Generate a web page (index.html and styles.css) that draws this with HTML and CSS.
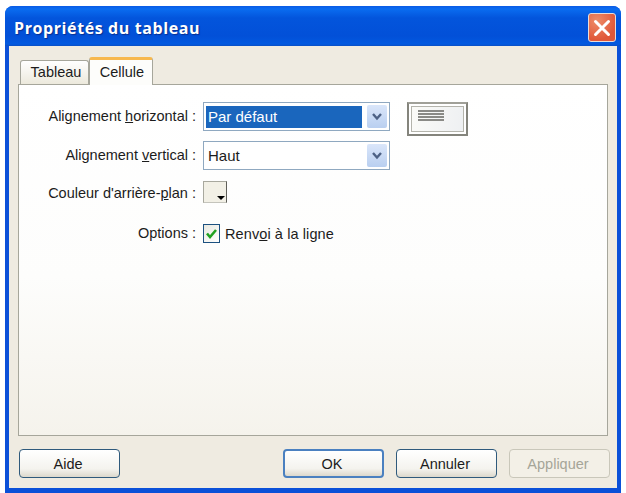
FILE: index.html
```html
<!DOCTYPE html>
<html lang="fr">
<head>
  <meta charset="UTF-8" />
  <title>Propriétés du tableau</title>
  <link rel="stylesheet" href="styles.css">
</head>
<body>
  <div class="window">
    <!-- Barre de titre -->
    <div class="titlebar">
      <span class="title">Propriétés du tableau</span>
      <div class="close">
        <svg width="20" height="20" viewBox="0 0 20 20"><path d="M3.5 3.5 L16.5 16.5 M16.5 3.5 L3.5 16.5" stroke="#fff" stroke-width="3" stroke-linecap="round"/></svg>
      </div>
    </div>

    <div class="client">
      <!-- Onglets -->
      <div class="tabs">
        <div class="tab">Tableau</div>
        <div class="tab active">Cellule</div>
      </div>

      <div class="pane">
        <div class="form">
          <label class="label row-tall">Alignement <u>h</u>orizontal :</label>
          <div class="controls">
            <div class="select">
              <span class="select-value selected">Par défaut</span>
              <span class="select-btn">
                <svg width="12" height="10" viewBox="0 0 12 10"><path d="M2 2 L6 6.5 L10 2" fill="none" stroke="#4d6185" stroke-width="2.4"/></svg>
              </span>
            </div>
            <div class="preview">
              <div class="preview-inner">
                <span class="line"></span><span class="line"></span><span class="line"></span><span class="line"></span>
              </div>
            </div>
          </div>

          <label class="label row-tall">Alignement <u>v</u>ertical :</label>
          <div class="controls">
            <div class="select">
              <span class="select-value">Haut</span>
              <span class="select-btn">
                <svg width="12" height="10" viewBox="0 0 12 10"><path d="M2 2 L6 6.5 L10 2" fill="none" stroke="#4d6185" stroke-width="2.4"/></svg>
              </span>
            </div>
          </div>

          <label class="label row-color">Couleur d'arrière-<u>p</u>lan :</label>
          <div class="controls">
            <div class="color-btn"><span class="color-arrow"></span></div>
          </div>

          <label class="label row-check">Options :</label>
          <div class="controls check-row">
            <span class="checkbox">
              <svg width="13" height="13" viewBox="0 0 13 13"><path d="M2 6.5 L5 10 L11 3" fill="none" stroke="#21a121" stroke-width="2.6"/></svg>
            </span>
            <span class="check-label">Renv<u>o</u>i à la ligne</span>
          </div>
        </div>
      </div>

      <!-- Boutons -->
      <div class="buttons">
        <button class="btn">Aide</button>
        <div class="btn-group">
          <button class="btn default">OK</button>
          <button class="btn">Annuler</button>
          <button class="btn disabled">Appliquer</button>
        </div>
      </div>
    </div>
  </div>
</body>
</html>
```
FILE: styles.css
```css
body {
  margin: 0;
  background: #fff;
  font-family: "Liberation Sans", Arial, sans-serif;
  font-size: 14px;
  color: #1c1c1c;
  overflow: hidden;
}

.window {
  margin: 6px 5px 0;
  height: 487px;
  box-sizing: border-box;
  padding: 0 4px 5px;
  background: #0b50d8;
  border-radius: 8px 8px 0 0;
  display: flex;
  flex-direction: column;
}

/* --- Barre de titre --- */
.titlebar {
  height: 40px;
  flex: none;
  margin: 0 -4px;
  padding: 0 5px 0 9px;
  box-sizing: border-box;
  border-radius: 8px 8px 0 0;
  background: linear-gradient(#0a5be6 0, #0a6cf0 3px, #0355dc 12px, #0250d8 30px, #0259e0 38px, #0a4fc4 40px);
  display: flex;
  justify-content: space-between;
  align-items: flex-start;
}
.title {
  margin-top: 11px;
  color: #fff;
  font-family: "Open Sans", sans-serif;
  font-size: 16px;
  font-weight: 700;
  letter-spacing: 0.6px;
  text-shadow: 1px 1px 1px #0a2f90;
}
.close {
  margin-top: 7px;
  width: 28px;
  height: 29px;
  box-sizing: border-box;
  border: 1px solid #e8dcd8;
  border-radius: 3px;
  background: radial-gradient(circle at 30% 25%, #ee8c68, #e0583a 70%);
  display: flex;
  align-items: center;
  justify-content: center;
}

/* --- Zone client --- */
.client {
  flex: 1;
  background: #efebe1;
  padding: 11px 9px 0;
  display: flex;
  flex-direction: column;
}
.tabs {
  display: flex;
  align-items: flex-end;
  height: 27px;
  padding-left: 2px;
  position: relative;
  z-index: 1;
}
.tab {
  width: 69px;
  height: 24px;
  box-sizing: border-box;
  padding: 3px 0 0 3px;
  text-align: center;
  background: linear-gradient(#fff, #ece9dc);
  border: 1px solid #a6a69b;
  border-bottom: none;
  border-radius: 3px 3px 0 0;
  font-size: 14.5px;
}
.tab.active {
  width: 64px;
  height: 28px;
  margin-bottom: -1px;
  padding: 4px 0 0 2px;
  background: #fdfdfb;
  border-top: 3px solid #f7b84e;
  border-left: 1px solid #a6a69b;
  border-right: 1px solid #a6a69b;
}
.pane {
  height: 352px;
  box-sizing: border-box;
  border: 1px solid #a6a69b;
  background: linear-gradient(#fff, #fdfdfc 55%, #f5f3ec);
  padding-top: 17px;
}

.form {
  display: grid;
  grid-template-columns: 177px 1fr;
  column-gap: 7px;
  grid-template-rows: 29px 29px 22px 31px;
  row-gap: 10px;
}
.label {
  text-align: right;
  font-size: 14.5px;
  line-height: 29px;
  white-space: nowrap;
}
.label.row-color { line-height: 24px; margin-top: 1px; }
.label.row-check { line-height: 19px; margin-top: 12px; }
.controls {
  display: flex;
  align-items: flex-start;
}

/* --- Listes --- */
.select {
  width: 187px;
  height: 29px;
  box-sizing: border-box;
  border: 1px solid #8fa8c0;
  background: #fff;
  padding: 3px 2px 2px 2px;
  display: flex;
  justify-content: space-between;
  font-size: 15px;
  line-height: 21px;
}
.select-value {
  padding-left: 2px;
  flex: 1;
}
.select-value.selected {
  background: #1a66bd;
  color: #fff;
  margin-right: 5px;
}
.select-btn {
  width: 20px;
  height: 23px;
  margin-top: -1px;
  background: linear-gradient(#dae6fa, #b9cff0);
  border-radius: 2px;
  display: flex;
  align-items: center;
  justify-content: center;
}
.preview {
  margin-left: 17px;
  width: 61px;
  height: 34px;
  box-sizing: border-box;
  border: 2px solid #84847c;
  border-top-color: #a0a098;
  padding: 2px;
  background: #fff;
}
.preview-inner {
  height: 100%;
  box-sizing: border-box;
  border: 1px solid #b4b4ac;
  background: linear-gradient(100deg, #fbfbf8, #eef0f2);
  padding: 3px 0 0 6px;
}
.line {
  display: block;
  width: 26px;
  height: 2px;
  margin-bottom: 1px;
  background: #8a8a86;
}

.color-btn {
  width: 24px;
  height: 22px;
  box-sizing: border-box;
  margin-top: 1px;
  border: 1px solid;
  border-color: #a8a89e #5e5e58 #c4c4bc #a8a89e;
  background: #f2f0e6;
  position: relative;
}
.color-arrow {
  position: absolute;
  right: 1px;
  bottom: 2px;
  width: 0;
  height: 0;
  border: 4px solid transparent;
  border-top: 4px solid #000;
  border-bottom: none;
}

.check-row {
  align-items: center;
  margin-top: 12px;
}
.checkbox {
  width: 17px;
  height: 19px;
  box-sizing: border-box;
  border: 1px solid #1c5180;
  background: linear-gradient(135deg, #e8e8e0, #fff);
  display: flex;
  align-items: center;
  justify-content: center;
}
.check-label {
  margin-left: 5px;
  font-size: 14.5px;
  letter-spacing: 0.1px;
}

/* --- Boutons --- */
.buttons {
  display: flex;
  justify-content: space-between;
  margin-top: 13px;
  padding-left: 1px;
}
.btn-group {
  display: flex;
  gap: 12px;
  margin-right: -2px;
}
.btn {
  width: 101px;
  height: 29px;
  padding: 0 3px 0 0;
  font-family: inherit;
  font-size: 14.5px;
  color: #1c1c1c;
  border: 1px solid #2f5a7c;
  border-radius: 4px;
  background: linear-gradient(#fff, #f4f3ee 70%, #dcd8cc);
}
.btn.default {
  border: 2px solid #4a80c0;
}
.btn.disabled {
  color: #a5a598;
  border-color: #c9c7ba;
  background: #f3f0e7;
}
```
